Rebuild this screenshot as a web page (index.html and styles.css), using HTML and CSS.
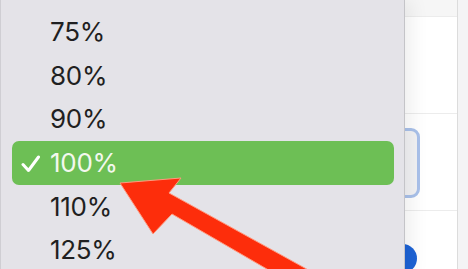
FILE: index.html
```html
<!DOCTYPE html>
<html lang="en">
<head>
    <meta charset="UTF-8">
    <meta name="viewport" content="width=device-width, initial-scale=1.0">
    <title>Zoom menu</title>
    <link rel="stylesheet" href="styles.css">
</head>
<body>
    <div class="page">
        <div class="sheet">
            <div class="row row-top"></div>
            <div class="row row-mid"></div>
            <div class="row row-field">
                <div class="field"></div>
            </div>
            <div class="row row-last">
                <div class="dot"></div>
            </div>
        </div>
    </div>

    <!-- zoom popup -->
    <ul class="menu">
        <li class="item">75%</li>
        <li class="item">80%</li>
        <li class="item">90%</li>
        <li class="item selected">
            <svg class="check" width="20" height="18" viewBox="0 0 20 18">
                <polyline points="2,9.5 7.5,15.5 17.5,2" fill="none" stroke="#fff" stroke-width="3" stroke-linecap="round" stroke-linejoin="round"/>
            </svg>
            100%
        </li>
        <li class="item">110%</li>
        <li class="item">125%</li>
    </ul>

    <svg class="arrow" width="468" height="269" viewBox="0 0 468 269">
        <polygon points="120,183 181,178 169,193 312,272 272,272 172,214 153,234" fill="#fd2d0b" stroke="#ff9a80" stroke-width="1" stroke-linejoin="round"/>
    </svg>
</body>
</html>
```

FILE: styles.css
```css
body {
    margin: 0;
    width: 468px;
    height: 269px;
    overflow: hidden;
    position: relative;
    font-family: Inter, "Noto Sans", sans-serif;
    background-color: #f4f4f5;
}
.page {
    height: 269px;
}
.sheet {
    width: 457px;
    height: 269px;
    background-color: #fff;
    border-right: 1px solid #dcdcdc;
}
.row {
    border-bottom: 1px solid #ececec;
}
.row-top {
    height: 16px;
    background-color: #f6f6f6;
}
.row-mid {
    height: 96px;
}
.row-field {
    height: 97px;
    padding-top: 14px;
    box-sizing: border-box;
}
.field {
    margin-left: 300px;
    width: 114px;
    height: 64px;
    border: 3px solid #a9c1ea;
    border-radius: 9px;
    background-color: #f2f2f4;
}
.row-last {
    border-bottom: none;
    padding-top: 33px;
}
.dot {
    margin-left: 388px;
    width: 29px;
    height: 29px;
    border-radius: 50%;
    background-color: #1d63d6;
}
.menu {
    position: absolute;
    left: 0;
    top: 0;
    width: 382px;
    height: 269px;
    margin: 0;
    padding: 10px 10px 0 11px;
    list-style: none;
    background-color: #e4e3e8;
    border-left: 1px solid #cfced3;
    border-right: 1px solid #c4c4c8;
    box-shadow: 6px 0 18px rgba(0, 0, 0, 0.07);
}
.item {
    position: relative;
    height: 43.7px;
    line-height: 43.7px;
    padding-left: 38px;
    font-size: 26px;
    letter-spacing: -0.3px;
    color: #1f1f21;
    border-radius: 7px;
}
.item.selected {
    background-color: #6dbf55;
    color: #f3f8ee;
}
.check {
    position: absolute;
    left: 9px;
    top: 14px;
}
.arrow {
    position: absolute;
    left: 0;
    top: 0;
}
```
